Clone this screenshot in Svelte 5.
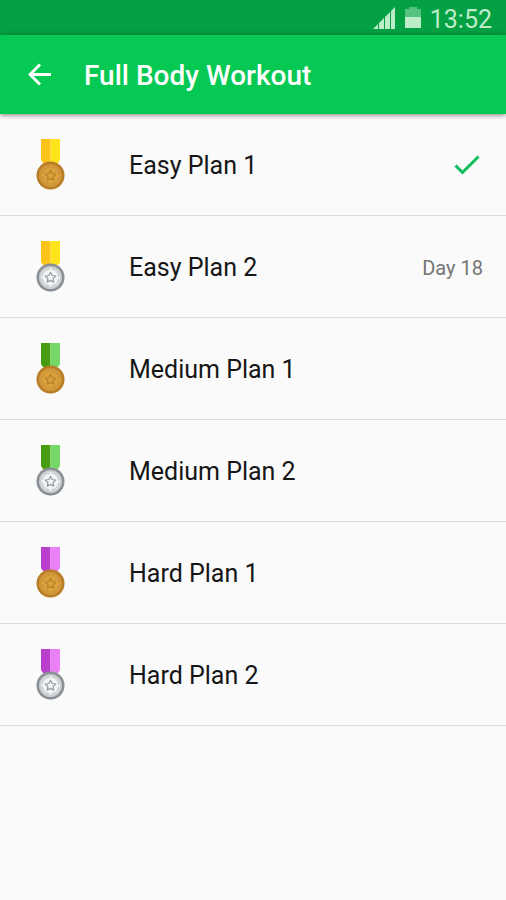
<script lang="ts">
	interface Plan {
		name: string;
		ribbon: 'yellow' | 'green' | 'purple';
		coin: 'gold' | 'silver';
		done?: boolean;
		day?: number;
	}

	const plans: Plan[] = [
		{ name: 'Easy Plan 1', ribbon: 'yellow', coin: 'gold', done: true },
		{ name: 'Easy Plan 2', ribbon: 'yellow', coin: 'silver', day: 18 },
		{ name: 'Medium Plan 1', ribbon: 'green', coin: 'gold' },
		{ name: 'Medium Plan 2', ribbon: 'green', coin: 'silver' },
		{ name: 'Hard Plan 1', ribbon: 'purple', coin: 'gold' },
		{ name: 'Hard Plan 2', ribbon: 'purple', coin: 'silver' }
	];

	const ribbons = {
		yellow: ['#fcc419', '#ffe41c'],
		green: ['#479c10', '#76d866'],
		purple: ['#bb3fcf', '#ea80f5']
	};

	const coins = {
		gold: { rim: '#b97c26', face: '#d0953a', inner: '#dba23c', line: '#b9812c' },
		silver: { rim: '#8a8f93', face: '#c9cccf', inner: '#f3f4f5', line: '#989ca0' }
	};
</script>

<div class="status-bar">
	<svg class="signal" width="23" height="22" viewBox="0 0 23 22" aria-hidden="true">
		<path d="M0 22l5-5v5zM6 22v-6l5-5v11zM12 22V10l5-5v17zM18 22V4l4-4v22z" />
	</svg>
	<svg class="battery" width="16" height="21" viewBox="0 0 16 21" aria-hidden="true">
		<path opacity="0.45" d="M0 2h4V0h8v2h4v8H0z" />
		<path d="M0 10h16v11H0z" />
	</svg>
	<span class="clock">13:52</span>
</div>

<header class="app-bar">
	<button class="back" type="button" aria-label="Back">
		<svg width="24" height="24" viewBox="0 0 24 24" aria-hidden="true">
			<path d="M23 11.5H2M12 1.5L2 11.5l10 10" />
		</svg>
	</button>
	<h1 class="title">Full Body Workout</h1>
</header>

<ul class="plans">
	{#each plans as plan}
		{@const coin = coins[plan.coin]}
		<li>
			<a class="plan" href="#plan">
				<svg class="medal" width="29" height="52" viewBox="0 0 29 52" aria-hidden="true">
					<path fill={ribbons[plan.ribbon][0]} d="M5 0h9.5v24H7L5 21z" />
					<path fill={ribbons[plan.ribbon][1]} d="M14.5 0H24v21l-2 3h-7.500z" />
					<circle cx="14.5" cy="36.5" r="14" fill={coin.rim} />
					<circle cx="14.5" cy="36.5" r="11.5" fill={coin.face} />
					<circle cx="14.5" cy="36.5" r="9.5" fill={coin.inner} />
					<circle
						cx="14.5"
						cy="36.5"
						r="8.5"
						fill="none"
						stroke={coin.line}
						stroke-width="0.6"
						stroke-dasharray="11.35 2"
						stroke-dashoffset="-1"
					/>
					<path
						fill="none"
						stroke={coin.line}
						stroke-width="1.2"
						stroke-linejoin="round"
						d="M14.5 31.200l1.600 3.300 3.600.5-2.600 2.500.6 3.600-3.200-1.700-3.200 1.700.6-3.600-2.600-2.500 3.600-.5z"
					/>
				</svg>
				<span class="name">{plan.name}</span>
				{#if plan.done}
					<svg class="check" width="26" height="20" viewBox="0 0 26 20" role="img" aria-label="Done">
						<path d="M1.5 10.5L8.5 17.5L24.5 1.5" />
					</svg>
				{:else if plan.day}
					<span class="day">Day {plan.day}</span>
				{/if}
			</a>
		</li>
	{/each}
</ul>

<style>
	:global(body) {
		background: #fafafa;
		font-family: Roboto, 'Liberation Sans', sans-serif;
		color: #161616;
	}

	.status-bar {
		display: flex;
		align-items: center;
		justify-content: flex-end;
		height: 35px;
		padding: 0 14px;
		background: #03a144;
		color: #bdecc9;
	}

	.status-bar svg {
		fill: #bdecc9;
	}

	.signal {
		margin-right: 9px;
	}

	.battery {
		margin-right: 9px;
	}

	.clock {
		font-size: 25px;
		line-height: 35px;
		padding-top: 4px;
	}

	.app-bar {
		display: flex;
		align-items: center;
		height: 79px;
		padding: 0 16px;
		background: #05c953;
		box-shadow: 0 1px 5px rgba(0, 0, 0, 0.5);
		position: relative;
	}

	.back {
		display: flex;
		padding: 12px;
		border: 0;
		background: none;
		cursor: pointer;
	}

	.back path {
		fill: none;
		stroke: #fff;
		stroke-width: 3;
	}

	.title {
		margin: 0 0 0 20px;
		padding-top: 2px;
		font-size: 28px;
		font-weight: 500;
		line-height: 36px;
		color: #fff;
	}

	.plans {
		list-style: none;
		margin: 0;
		padding: 0;
	}

	.plan {
		display: flex;
		align-items: center;
		box-sizing: border-box;
		height: 102px;
		padding: 0 23px 0 36px;
		border-bottom: 1px solid #dcdcdc;
		color: inherit;
		text-decoration: none;
	}

	.medal {
		flex: none;
		margin-right: 64px;
	}

	.name {
		flex: 1;
		padding-top: 2px;
		font-size: 25px;
		line-height: 32px;
	}

	.check {
		margin-right: 3px;
		fill: none;
		stroke: #10bd5c;
		stroke-width: 3;
	}

	.day {
		padding-top: 2px;
		font-size: 20px;
		line-height: 24px;
		color: #757575;
	}
</style>
